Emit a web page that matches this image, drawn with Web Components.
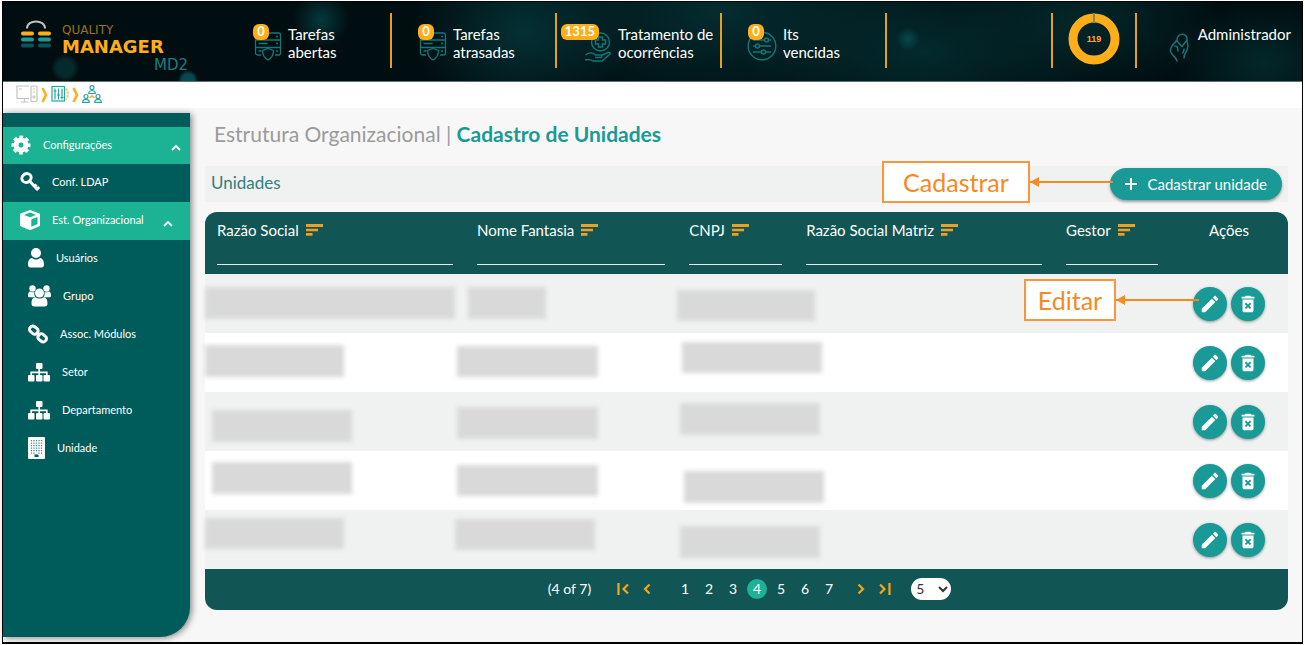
<!DOCTYPE html>
<html lang="pt-BR">
<head>
<meta charset="utf-8">
<title>Quality Manager MD2 - Cadastro de Unidades</title>
<style>
body { margin: 0; padding: 1px 2px; background: #fff; font-family: "Lato", "Open Sans", sans-serif; }
</style>
</head>
<body>
<qm-app></qm-app>

<script>
const ICONS = {
  cog: [20, 20, '<circle cx="10" cy="10" r="5" fill="none" stroke="currentColor" stroke-width="5"/><circle cx="10" cy="10" r="8" fill="none" stroke="currentColor" stroke-width="3" stroke-dasharray="3.7 2.583" stroke-dashoffset="1.85"/>'],
  key: [20, 20, '<g fill="none" stroke="currentColor" stroke-width="3"><ellipse cx="6.5" cy="6" rx="4.8" ry="4.2" transform="rotate(-35 6.5 6)"/><path d="M9.5 9l8 8.5M13.5 15.5l3-3M16.2 18l3-3"/></g>'],
  cube: [20, 20, '<path fill="currentColor" fill-rule="evenodd" d="M10 0l9.5 3.6c.4.2.5.5.5.9v10.700c0 .4-.2.8-.6 1L10.500 20h-1L.6 16.200c-.4-.2-.6-.6-.6-1V4.500c0-.4.2-.7.5-.9zM10 2.600L4 5l6 2.300L16 5zM11.300 9.500v7.300L17.500 14V7z"/>'],
  user: [16, 20, '<circle cx="8" cy="5" r="5" fill="currentColor"/><path fill="currentColor" d="M0 17c0-4 1-6.500 4-7 2.500 2 5.500 2 8 0 3 .5 4 3 4 7 0 1.500-1 2.500-2.500 2.500h-11C1 19.500 0 18.500 0 17z"/>'],
  users: [23, 22, '<g fill="currentColor"><circle cx="4.500" cy="3.500" r="3.200"/><circle cx="18.500" cy="3.500" r="3.200"/><path d="M0 11c0-3 .5-4.500 2.500-4.500 1.500 1 2.500 1 4 .5-.5 2 0 4 1.200 5.200H2C.7 12.200 0 12 0 11zM23 11c0-3-.5-4.500-2.500-4.500-1.500 1-2.500 1-4 .5.5 2 0 4-1.200 5.200H21c1.300 0 2-.2 2-1.200z"/><circle cx="11.500" cy="8" r="4.500"/><path d="M3.500 18.500c0-3.500 1-6 3.800-6.300 2.500 1.800 5.900 1.800 8.400 0 2.800.3 3.800 2.800 3.800 6.300 0 2-1 3-2.800 3H6.300c-1.800 0-2.800-1-2.800-3z"/></g>'],
  link: [20, 20, '<g fill="none" stroke="currentColor" stroke-width="3"><rect x="1.500" y="3" width="9" height="6.500" rx="3" transform="rotate(40 6 6)"/><rect x="9.500" y="10.500" width="9" height="6.500" rx="3" transform="rotate(40 14 14)"/><path d="M8 8l4 4" stroke-width="2.500"/></g>'],
  sitemap: [22, 20, '<g fill="currentColor"><rect x="8" y="1" width="6.500" height="6" rx="1"/><rect x="0" y="13" width="6.500" height="6.500" rx="1"/><rect x="8" y="13" width="6.500" height="6.500" rx="1"/><rect x="15.500" y="13" width="6.500" height="6.500" rx="1"/></g><path d="M3.200 14v-3.700h15.600V14M11.200 6v8" fill="none" stroke="currentColor" stroke-width="1.700"/>'],
  building: [17, 22, '<rect width="17" height="22" rx="1" fill="currentColor"/><path d="M3.500 3v14M6 3v14M8.500 3v12M11 3v14M13.500 3v14" stroke="#005c5a" stroke-width="1.300" stroke-dasharray="1.300 1.200" opacity=".7"/><path d="M6.500 17.500h4V20h-4z" fill="#005c5a"/>'],
  up: [10, 6, '<path d="M1 5l4-4 4 4" fill="none" stroke="currentColor" stroke-width="1.800"/>'],
  sort: [17, 12, '<path fill="currentColor" d="M0 0h17v3H0zM0 4.700h12v2.500H0zM0 9h6.500v2.700H0z"/>'],
  plus: [14, 14, '<path d="M7 1v12M1 7h12" stroke="currentColor" stroke-width="2"/>'],
  edit: [24, 24, '<path fill="currentColor" d="M3 17.250V21h3.750L17.810 9.940l-3.750-3.750L3 17.250zM20.710 7.040c.39-.39.39-1.020 0-1.410l-2.340-2.340c-.39-.39-1.020-.39-1.410 0l-1.830 1.830 3.750 3.750 1.830-1.830z"/>'],
  trash: [24, 24, '<path fill="currentColor" d="M6 19c0 1.100.9 2 2 2h8c1.100 0 2-.9 2-2V7H6v12zm2.460-7.120l1.410-1.410L12 12.590l2.120-2.120 1.410 1.410L13.410 14l2.120 2.120-1.410 1.410L12 15.410l-2.120 2.120-1.410-1.410L10.590 14l-2.130-2.120zM15.500 4l-1-1h-5l-1 1H5v2h14V4z"/>'],
  first: [12, 12, '<path d="M1.500 0v12M11 1.500L6.500 6l4.500 4.500" fill="none" stroke="currentColor" stroke-width="2.200"/>'],
  prev: [8, 12, '<path d="M6.500 1.500L2 6l4.500 4.500" fill="none" stroke="currentColor" stroke-width="2.200"/>'],
  next: [8, 12, '<path d="M1.500 1.500L6 6l-4.500 4.500" fill="none" stroke="currentColor" stroke-width="2.200"/>'],
  last: [12, 12, '<path d="M10.500 0v12M1 1.500L5.500 6 1 10.500" fill="none" stroke="currentColor" stroke-width="2.200"/>'],
  server: [28, 30, '<g fill="none" stroke="currentColor" stroke-width="1.300"><path d="M7 24H3.500a2 2 0 01-2-2v-5.500h25V22a2 2 0 01-2 2H21M1.500 9h25v7.500h-25zM3 9V3.500A1.500 1.500 0 014.500 2h20A2 2 0 0126.500 4v5M4.500 12.500h9M4.500 20h3M22 5.500h2M22 12.500h2M22 20h2"/><path d="M14 17.500l5.500 2c0 5-2 7.500-5.500 9.500-3.500-2-5.500-4.500-5.500-9.500z" fill="#011518"/></g>'],
  care: [28, 32, '<g fill="none" stroke="currentColor" stroke-width="1.400"><circle cx="16.500" cy="11" r="9"/><path d="M14.500 6h4v3h3v4h-3v3h-4v-3h-3V9h3zM1.500 24c4-3 7-3 10 0h5c2 0 2 2.500 0 2.500H11M17 24.500l7-3c2-.5 3 .5 1.500 2L18 30H9c-3-2-5-2-8-1"/></g>'],
  sliders: [30, 30, '<g fill="none" stroke="currentColor" stroke-width="1.400"><circle cx="15" cy="15" r="13.800"/><path d="M6 9h11M22 9h2M6 15h2M13 15h11M6 21h8M19 21h5"/><circle cx="19.500" cy="9" r="2"/><circle cx="10.500" cy="15" r="2"/><circle cx="16.500" cy="21" r="2"/></g>'],
  person: [20, 30, '<g fill="none" stroke="currentColor" stroke-width="1.500" stroke-linecap="round" stroke-linejoin="round"><path d="M8 7c0-8 11-7.500 10 0l-5 6.500L8 8zM8 7C6 10 1 13 1.500 18c.5 4 5 5 6.500 10M6 13c2 0 3 2 3 5M18 8c1 3 1 8-1 11-1.500 2-2 3-2 6M15 16c0 2-.5 3-1.500 4"/></g>'],
  computer: [22, 18, '<g fill="none" stroke="currentColor" stroke-width="1.200"><path d="M13 13.500H1V1h12M5 17h7M8.500 13.500V17M3 4h3"/><rect x="15" y="1" width="6" height="15.500" rx="1"/><path d="M17 4h2M17 7h2"/><circle cx="18" cy="12" r="1"/></g>'],
  panel: [18, 18, '<g fill="none" stroke="currentColor" stroke-width="1.200"><rect x="1" y="1.500" width="12.500" height="14.500"/><path d="M4 3.500v11M7.500 3.500v11M11 3.500v11M2.500 6h3M6 10h3M9.500 12.500h3"/></g><path d="M14.500 4c3 0 3 10 0 10" fill="none" stroke="#fbc667" stroke-width="2" stroke-dasharray="2.500 1"/>'],
  team: [20, 18, '<g fill="none" stroke="currentColor" stroke-width="1.200"><circle cx="10" cy="2.700" r="2"/><path d="M6.700 8.500c0-4 6.600-4 6.600 0z"/><circle cx="4" cy="11.500" r="2"/><path d="M.7 17.300c0-4 6.600-4 6.600 0z"/><circle cx="16" cy="11.500" r="2"/><path d="M12.700 17.300c0-4 6.600-4 6.600 0z"/></g><path d="M10 9.500v2M7.500 13L10 11l2.500 2" fill="none" stroke="#ffae1a" stroke-width="1.400"/>'],
  step: [7, 16, '<path d="M1.500 1l3.500 7-3.500 7" fill="none" stroke="currentColor" stroke-width="2.600"/>'],
  padlock: [32, 28, '<path d="M7 8.500C7 -1 25 -1 25 8.500" fill="none" stroke="#b9c0c6" stroke-width="2"/><g stroke-width="4" stroke-linecap="round"><path d="M3 13.500h9M20 13.500h9" stroke="#ffae1a"/><path d="M3 19.500h9M20 19.500h9" stroke="#1a9a98"/><path d="M3 25.500h9M20 25.500h9" stroke="#0d5357"/></g>'],
};

class Base extends HTMLElement {
  constructor() {
    super();
    this.attachShadow({ mode: 'open' });
  }
  connectedCallback() {
    this.shadowRoot.innerHTML = '<style>*{box-sizing:border-box}' + this.css() + '</style>' + this.html();
  }
  css() { return ''; }
  html() { return ''; }
}

class QmIcon extends Base {
  css() { return ':host{display:inline-block;flex:none;line-height:0}svg{display:block}'; }
  html() {
    const [w, h, body] = ICONS[this.getAttribute('name')];
    const width = Number(this.getAttribute('size')) || w;
    const height = Math.round(width * h / w);
    return `<svg width="${width}" height="${height}" viewBox="0 0 ${w} ${h}" aria-hidden="true">${body}</svg>`;
  }
}

class QmLogo extends Base {
  css() {
    return `:host{display:flex;align-items:flex-start;gap:10px;padding:18px 0 0 17px;font-family:"DejaVu Sans",sans-serif}
    .words{display:flex;flex-direction:column;width:126px}
    span{display:block}
    .a{font-size:12px;line-height:14px;color:#9c7019;margin-top:3px}
    .b{font-size:18px;line-height:20px;font-weight:700;color:#ffae1a}
    .c{font-size:15px;line-height:17px;color:#158080;text-align:right}`;
  }
  html() {
    return '<qm-icon name="padlock" size="32"></qm-icon><div class="words"><span class="a">QUALITY</span><span class="b">MANAGER</span><span class="c">MD2</span></div>';
  }
}

class QmStat extends Base {
  css() {
    return `:host{display:flex;width:165px;height:55px;border-right:2px solid #e5a01c;color:#fff}
    a{display:flex;color:inherit;text-decoration:none;width:100%}
    .pic{position:relative;width:61px;color:#11787a;display:flex;justify-content:flex-end;padding:18px 6px 0 0}
    .badge{position:absolute;top:11px;right:19px;min-width:16px;height:16px;padding:0 4px;border-radius:6px;background:#ffae1a;color:#fff;font-size:13px;line-height:15px;font-weight:700;text-align:center}
    .text{font-size:15px;line-height:18px;padding-top:12px;white-space:pre-line}`;
  }
  html() {
    return `<a href="#"><span class="pic"><qm-icon name="${this.getAttribute('icon')}"></qm-icon><span class="badge">${this.getAttribute('count')}</span></span><span class="text"><slot></slot></span></a>`;
  }
}

class QmHeader extends Base {
  css() {
    return `:host{display:flex;height:80px;color:#fff;border-bottom:1px solid #5b7274;
      background:radial-gradient(28px 28px at 318px 18px,#06383c,transparent),
      radial-gradient(14px 14px at 62px 66px,#05292c 60%,transparent),
      radial-gradient(10px 10px at 185px 78px,#07494d 60%,transparent),
      radial-gradient(12px 12px at 905px 37px,#07494d,transparent),
      radial-gradient(110px 90px at 520px 30px,#043034,transparent),
      radial-gradient(220px 100px at 720px 10px,#042c30,transparent),
      radial-gradient(180px 90px at 920px 50px,#032a2d,transparent),
      radial-gradient(140px 70px at 1080px 20px,#03272a,transparent),
      radial-gradient(90px 60px at 1260px 60px,#03272a,transparent),#010e11}
    qm-logo{width:224px}
    nav{display:flex;padding-top:11px}
    .ring{margin:11px 0 0 auto;width:86px;height:55px;border:solid #e5a01c;border-width:0 2px;display:flex;justify-content:center}
    .user{width:165px;display:flex;justify-content:flex-end;gap:9px;padding:23px 11px 0 0;font-size:15px;line-height:18px;color:#fff;text-decoration:none}
    .user qm-icon{color:#11787a;padding-top:8px}`;
  }
  html() {
    return `<qm-logo></qm-logo>
    <nav aria-label="Pendências">
      <qm-stat icon="server" count="0">Tarefas
abertas</qm-stat><qm-stat icon="server" count="0">Tarefas
atrasadas</qm-stat><qm-stat icon="care" count="1315">Tratamento de
ocorrências</qm-stat><qm-stat icon="sliders" count="0">Its
vencidas</qm-stat>
    </nav>
    <div class="ring"><svg width="52" height="52" viewBox="0 0 52 52">
      <circle cx="26" cy="26" r="21" fill="none" stroke="#ffae1a" stroke-width="9"/><path d="M26 0v10" stroke="#7f8f4a" stroke-width="2"/>
      <text x="26" y="29" text-anchor="middle" font-family="Liberation Sans, sans-serif" font-weight="700" font-size="9" fill="#ffae1a">119</text></svg></div>
    <a class="user" href="#"><qm-icon name="person"></qm-icon><span>Administrador</span></a>`;
  }
}

class QmCrumbs extends Base {
  css() {
    return `:host{display:flex;align-items:center;height:26px;background:#fff;padding-left:13px;gap:3px;color:#ffae1a}
    a{display:block;color:#2aa3a1}a.off{color:#c4c4c4}`;
  }
  html() {
    return `<a class="off" href="#" aria-label="Início"><qm-icon name="computer"></qm-icon></a><qm-icon name="step"></qm-icon>
    <a href="#" aria-label="Configurações"><qm-icon name="panel"></qm-icon></a><qm-icon name="step"></qm-icon>
    <a href="#" aria-label="Estrutura"><qm-icon name="team"></qm-icon></a>`;
  }
}

class QmMenuItem extends Base {
  css() {
    return `:host{display:block;color:#fff}
    a{display:flex;align-items:center;gap:12px;height:38px;color:inherit;text-decoration:none;font-size:11px;line-height:14px;padding:0 8px 2px}
    a.one{height:37px}a.two{padding-left:17px;padding-right:16px}a.three{padding-left:25px}
    :host([open]) a{background:#1cb394}
    .arrow{margin:7px 1px 0 auto}`;
  }
  html() {
    const level = this.getAttribute('level');
    const arrow = this.hasAttribute('open') ? '<qm-icon class="arrow" name="up"></qm-icon>' : '';
    return `<a class="${level}" href="#"><qm-icon name="${this.getAttribute('icon')}"></qm-icon><span><slot></slot></span>${arrow}</a>`;
  }
}

class QmSidebar extends Base {
  css() {
    return `:host{display:block;flex:none;width:187px;margin:5px 0 5px;padding-top:14px;background:#005c5a;border-radius:0 0 30px 0;box-shadow:2px 1px 6px rgba(0,0,0,.45)}`;
  }
  html() {
    return `<nav aria-label="Menu">
    <qm-menu-item level="one" icon="cog" open>Configurações</qm-menu-item>
    <qm-menu-item level="two" icon="key">Conf. LDAP</qm-menu-item>
    <qm-menu-item level="two" icon="cube" open>Est. Organizacional</qm-menu-item>
    <qm-menu-item level="three" icon="user">Usuários</qm-menu-item>
    <qm-menu-item level="three" icon="users">Grupo</qm-menu-item>
    <qm-menu-item level="three" icon="link">Assoc. Módulos</qm-menu-item>
    <qm-menu-item level="three" icon="sitemap">Setor</qm-menu-item>
    <qm-menu-item level="three" icon="sitemap">Departamento</qm-menu-item>
    <qm-menu-item level="three" icon="building">Unidade</qm-menu-item></nav>`;
  }
}

class QmCallout extends Base {
  css() {
    return `:host{display:flex;align-items:center;position:absolute;pointer-events:none}
    b{display:flex;align-items:center;justify-content:center;height:42px;background:#fff;border:2px solid #f7963a;color:#f58a1f;font-weight:400;font-size:25px;line-height:28px}
    i{width:83px;height:10px;background:linear-gradient(#f58a1f,#f58a1f) center/100% 2px no-repeat;position:relative}
    i::before{content:"";position:absolute;left:0;top:0;border:solid transparent;border-width:5px 9px 5px 0;border-right-color:#f58a1f}
    :host([size=wide]) b{width:148px}:host([size=narrow]) b{width:92px}`;
  }
  html() { return '<b><slot></slot></b><i></i>'; }
}

class QmToolbar extends Base {
  css() {
    return `:host{display:flex;align-items:center;justify-content:space-between;position:relative;height:36px;margin-bottom:10px;padding:0 6px;background:#f0f2f1;color:#33807c}
    h2{margin:0;padding-bottom:3px;font-size:17px;line-height:20px;font-weight:400}
    button{display:flex;align-items:center;gap:10px;height:32px;padding:0 15px 0 14px;border:0;border-radius:16px;background:#199a96;color:#fff;font:inherit;font-size:15px;line-height:18px;box-shadow:0 2px 3px rgba(0,0,0,.35)}
    qm-callout{right:175px;top:-5px}`;
  }
  html() {
    return '<h2>Unidades</h2><button type="button"><qm-icon name="plus"></qm-icon>Cadastrar unidade</button><qm-callout size="wide">Cadastrar</qm-callout>';
  }
}

class QmPager extends Base {
  css() {
    return `:host{display:flex;justify-content:center;align-items:center;height:41px;padding:0 0 2px 6px;box-sizing:border-box;background:#115655;border-radius:0 0 12px 12px;color:#fff;font-size:14px;line-height:20px}
    button{display:flex;align-items:center;justify-content:center;width:20px;height:20px;margin:0 2px;padding:0;border:0;border-radius:50%;background:none;color:inherit;font:inherit}
    button.nav{color:#f5a41c}
    button[aria-current]{background:#1cb394}
    .group{display:flex}.info{margin-right:20px}.pages{margin:0 8px 0 14px}
    select{margin-left:14px;width:40px;height:22px;border:0;border-radius:11px;background:#fff;color:#333;font:inherit;padding:0 0 0 1px}`;
  }
  html() {
    const nav = (n, l) => `<button type="button" class="nav" aria-label="${l}"><qm-icon name="${n}"></qm-icon></button>`;
    const pages = [1, 2, 3, 4, 5, 6, 7].map(n => `<button type="button"${n === 4 ? ' aria-current="page"' : ''}>${n}</button>`).join('');
    return `<span class="info">(4 of 7)</span><div class="group">${nav('first', 'Primeira')}${nav('prev', 'Anterior')}</div>
    <div class="group pages">${pages}</div><div class="group">${nav('next', 'Próxima')}${nav('last', 'Última')}</div>
    <select aria-label="Linhas por página"><option>5</option><option>10</option></select>`;
  }
}

/* Masks laid over confidential values: x, y, width, height in table space. */
const MASKS = [
  [0, 75, 250, 32], [263, 75, 78, 32], [472, 78, 138, 31],
  [0, 133, 139, 32], [252, 134, 141, 31], [477, 130, 140, 31],
  [7, 198, 140, 32], [252, 195, 141, 32], [475, 191, 140, 32],
  [7, 250, 140, 32], [252, 253, 141, 31], [479, 259, 140, 32],
  [0, 306, 139, 31], [250, 307, 140, 31], [475, 314, 140, 32],
];

class QmUnitTable extends Base {
  css() {
    return `:host{display:block;position:relative}
    table{width:100%;table-layout:fixed;border-collapse:separate;border-spacing:0}
    th{height:62px;padding:8px 12px 0;background:#115655;color:#fff;font-size:15px;line-height:20px;font-weight:400;text-align:left;vertical-align:top;white-space:nowrap}
    th:first-child{border-radius:12px 0 0 0}th:last-child{border-radius:0 12px 0 0;text-align:center}
    th qm-icon{color:#e9a227;margin-left:7px}
    input{display:block;width:100%;height:25px;padding:0;border:0;border-bottom:1px solid #e4ecec;background:none;color:#fff;font:inherit}
    td{height:59px;padding:0;background:#fff}
    tr:nth-child(odd) td{background:#f0f2f1}
    .acts{display:flex;justify-content:center;gap:4px}
    .acts button{display:flex;align-items:center;justify-content:center;width:34px;height:34px;padding:0;border:0;border-radius:50%;background:#199a96;color:#fff;box-shadow:0 1px 3px rgba(0,0,0,.4)}
    .mask{position:absolute;background:#d9d9d9;filter:blur(2px)}
    qm-callout{right:89px;top:67px}`;
  }
  html() {
    const cols = [['Razão Social', 24], ['Nome Fantasia', 19.6], ['CNPJ', 10.8], ['Razão Social Matriz', 24], ['Gestor', 10.7]];
    const head = cols.map(([t, w]) => `<th scope="col" style="width:${w}%">${t}<qm-icon name="sort"></qm-icon><input type="text" aria-label="Filtrar ${t}"></th>`).join('');
    const row = `<tr>${'<td></td>'.repeat(5)}<td><div class="acts"><button type="button" aria-label="Editar"><qm-icon name="edit" size="22"></qm-icon></button><button type="button" aria-label="Excluir"><qm-icon name="trash" size="22"></qm-icon></button></div></td></tr>`;
    const masks = MASKS.map(([x, y, w, h]) => `<span class="mask" style="left:${x}px;top:${y}px;width:${w}px;height:${h}px"></span>`).join('');
    return `<table><thead><tr>${head}<th scope="col">Ações</th></tr></thead><tbody>${row.repeat(5)}</tbody></table>${masks}<qm-callout size="narrow">Editar</qm-callout>`;
  }
}

class QmApp extends Base {
  css() {
    return `:host{display:flex;flex-direction:column;min-height:calc(100vh - 2px);box-sizing:border-box;border:1px solid #000;border-bottom-width:2px;background:#f7f7f7}
    .body{display:flex;flex:1}
    main{flex:1;min-width:0;padding:15px 14px 0 15px}
    h1{margin:0 0 21px 9px;font-size:21px;line-height:22px;font-weight:400;color:#9b9b9b}
    h1 strong{color:#199a96;font-weight:700}`;
  }
  html() {
    return `<qm-header></qm-header><qm-crumbs></qm-crumbs>
    <div class="body"><qm-sidebar></qm-sidebar>
    <main><h1>Estrutura Organizacional | <strong>Cadastro de Unidades</strong></h1>
    <qm-toolbar></qm-toolbar><qm-unit-table></qm-unit-table><qm-pager></qm-pager></main></div>`;
  }
}

customElements.define('qm-icon', QmIcon);
customElements.define('qm-logo', QmLogo);
customElements.define('qm-stat', QmStat);
customElements.define('qm-header', QmHeader);
customElements.define('qm-crumbs', QmCrumbs);
customElements.define('qm-menu-item', QmMenuItem);
customElements.define('qm-sidebar', QmSidebar);
customElements.define('qm-callout', QmCallout);
customElements.define('qm-toolbar', QmToolbar);
customElements.define('qm-pager', QmPager);
customElements.define('qm-unit-table', QmUnitTable);
customElements.define('qm-app', QmApp);
</script>
</body>
</html>
